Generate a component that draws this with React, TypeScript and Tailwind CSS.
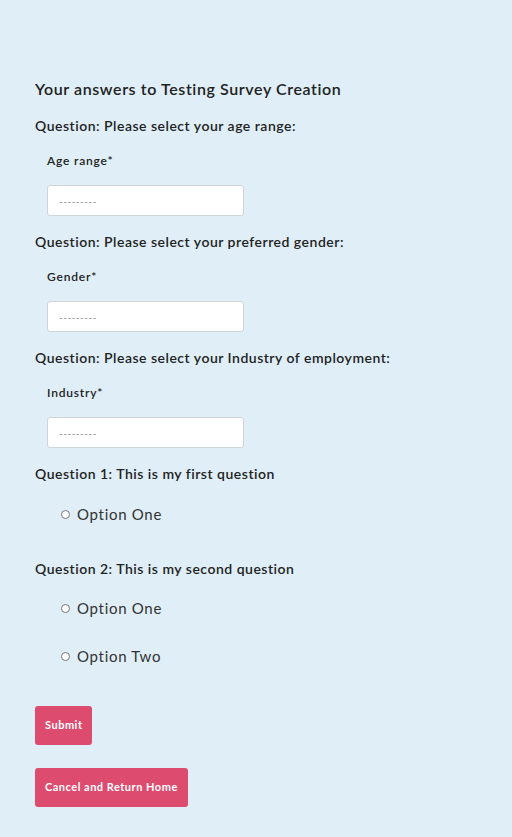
import { useState } from 'react';

const selects = [
    { question: 'Please select your age range:', label: 'Age range' },
    { question: 'Please select your preferred gender:', label: 'Gender' },
    { question: 'Please select your Industry of employment:', label: 'Industry' },
];

function Radio({ label, name }: { label: string; name: string }) {
    const [on, setOn] = useState(false);
    return (
        <label className="flex h-5 items-center pl-[26px]">
            <input
                type="radio"
                name={name}
                checked={on}
                onChange={() => setOn(true)}
                className="m-0 h-[9px] w-[9px] appearance-none rounded-full border border-[#767676] bg-white"
            />
            <span className="ml-[7px] text-[15px] leading-5 font-normal tracking-[0.7px] text-[#333]">{label}</span>
        </label>
    );
}

export default function App() {
    return (
        <div className="min-h-[837px] bg-[#dfeef7] px-[35px] pt-[77px] pb-[30px] font-['Lato',sans-serif] text-[#222]">
            <h1 className="text-[16px] leading-6 font-semibold tracking-[0.6px]">Your answers to Testing Survey Creation</h1>

            <form className="flex flex-col">
                {selects.map((s, i) => (
                    <div key={s.label} className={i === 0 ? 'mt-[15px]' : 'mt-4'}>
                        <p className="text-[14px] leading-5 font-semibold tracking-[0.5px]">Question: {s.question}</p>
                        <p className="mt-[17px] ml-3 text-[12px] leading-4 font-semibold tracking-[0.8px]">{s.label}*</p>
                        <div className="mt-4 ml-3 flex h-[31px] w-[197px] items-center rounded-[3px] border border-[#cfd4d8] bg-white px-[11px]">
                            <span className="text-[10px] leading-none tracking-[0.5px] text-[#888]">---------</span>
                        </div>
                    </div>
                ))}

                {/* Question 1 */}
                <p className="mt-4 text-[14px] leading-5 font-semibold tracking-[0.5px]">Question 1: This is my first question</p>
                <div className="mt-[20px]">
                    <Radio name="q1" label="Option One" />
                </div>

                {/* Question 2 */}
                <p className="mt-[35px] text-[14px] leading-5 font-semibold tracking-[0.5px]">Question 2: This is my second question</p>
                <div className="mt-[19px] flex flex-col gap-7">
                    <Radio name="q2" label="Option One" />
                    <Radio name="q2" label="Option Two" />
                </div>

                <div className="mt-10 flex flex-col items-start gap-[23px]">
                    <button type="button" className="h-[39px] rounded-[3px] bg-[#dd4b6f] px-[10px] text-[11px] font-bold tracking-[0.5px] text-white">
                        Submit
                    </button>
                    <button type="button" className="h-[39px] rounded-[3px] bg-[#dd4b6f] px-[10px] text-[11px] font-bold tracking-[0.5px] text-white">
                        Cancel and Return Home
                    </button>
                </div>
            </form>
        </div>
    );
}
